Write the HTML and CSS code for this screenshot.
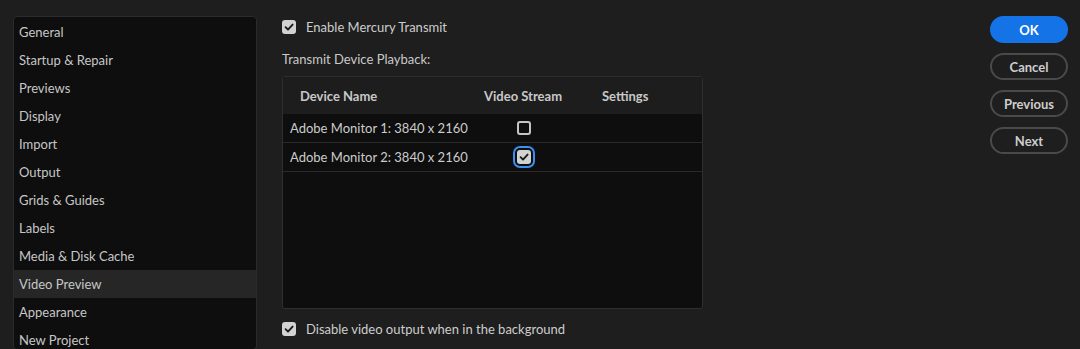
FILE: index.html
```html
<!DOCTYPE html>
<html>
<head>
<meta charset="utf-8">
<link rel="stylesheet" href="styles.css">
</head>
<body>
<div class="dialog">
  <nav class="sidebar">
    <div class="item">General</div>
    <div class="item">Startup &amp; Repair</div>
    <div class="item">Previews</div>
    <div class="item">Display</div>
    <div class="item">Import</div>
    <div class="item">Output</div>
    <div class="item">Grids &amp; Guides</div>
    <div class="item">Labels</div>
    <div class="item">Media &amp; Disk Cache</div>
    <div class="item selected">Video Preview</div>
    <div class="item">Appearance</div>
    <div class="item">New Project</div>
  </nav>
  <main class="content">
    <label class="check-row first">
      <span class="cb checked"><svg viewBox="0 0 14 14"><path d="M3.6 7.2 L6 9.6 L10.6 4.6" /></svg></span>
      <span class="label">Enable Mercury Transmit</span>
    </label>
    <div class="section-label">Transmit Device Playback:</div>
    <div class="table">
      <div class="thead">
        <div class="th c1">Device Name</div>
        <div class="th c2">Video Stream</div>
        <div class="th c3">Settings</div>
      </div>
      <div class="tr">
        <div class="td c1">Adobe Monitor 1: 3840 x 2160</div>
        <div class="td c2"><span class="cb empty"></span></div>
        <div class="td c3"></div>
      </div>
      <div class="tr">
        <div class="td c1">Adobe Monitor 2: 3840 x 2160</div>
        <div class="td c2"><span class="cb checked focus"><svg viewBox="0 0 14 14"><path d="M3.6 7.2 L6 9.6 L10.6 4.6" /></svg></span></div>
        <div class="td c3"></div>
      </div>
    </div>
    <label class="check-row last">
      <span class="cb checked"><svg viewBox="0 0 14 14"><path d="M3.6 7.2 L6 9.6 L10.6 4.6" /></svg></span>
      <span class="label">Disable video output when in the background</span>
    </label>
  </main>
  <div class="spacer"></div>
  <aside class="buttons">
    <button class="btn primary">OK</button>
    <button class="btn">Cancel</button>
    <button class="btn">Previous</button>
    <button class="btn">Next</button>
  </aside>
</div>
</body>
</html>
```

FILE: styles.css
```css
html, body {
  margin: 0;
  padding: 0;
  background: #1e1e1e;
  height: 349px;
  overflow: hidden;
}
body {
  font-family: Lato, "Open Sans", sans-serif;
  font-size: 13px;
  color: #cbcbcb;
}
.dialog {
  display: flex;
  align-items: flex-start;
  height: 349px;
  overflow: hidden;
}
.sidebar {
  margin-left: 13px;
  margin-top: 16px;
  width: 242px;
  height: 331px;
  background: #0e0e0e;
  border: 1px solid #2b2b2b;
  border-radius: 4px;
  padding-top: 1px;
  box-sizing: content-box;
  overflow: hidden;
}
.item {
  height: 28px;
  line-height: 28px;
  padding-left: 5px;
  color: #c6c6c6;
  white-space: nowrap;
}
.item.selected {
  background: #262626;
}
.content {
  margin-left: 25px;
  width: 421px;
  display: flex;
  flex-direction: column;
  margin-top: 16px;
}
.check-row {
  display: flex;
  align-items: center;
  height: 22px;
}
.check-row .label {
  margin-left: 10px;
  color: #cdcdcd;
}
.check-row.last {
  margin-top: 9px;
}
.cb {
  width: 14px;
  height: 14px;
  box-sizing: border-box;
  border-radius: 3px;
  display: inline-flex;
  align-items: center;
  justify-content: center;
  flex: none;
}
.cb.checked {
  background: #d2d2d2;
}
.cb svg {
  width: 14px;
  height: 14px;
}
.cb svg path {
  fill: none;
  stroke: #1a1a1a;
  stroke-width: 1.9;
  stroke-linecap: round;
  stroke-linejoin: round;
}
.cb.empty {
  border: 2px solid #c4c4c4;
}
.cb.focus {
  box-shadow: 0 0 0 2px #0e0e0e, 0 0 0 4px #3a8ff0;
}
.section-label {
  margin-top: 10px;
  height: 22px;
  line-height: 22px;
  color: #c9c9c9;
}
.table {
  margin-top: 6px;
  height: 233px;
  box-sizing: border-box;
  border: 1px solid #2e2e2e;
  border-radius: 3px;
  background: #0e0e0e;
  overflow: hidden;
}
.thead, .tr {
  display: grid;
  grid-template-columns: 201px 118px 1fr;
  align-items: center;
}
.thead {
  height: 37px;
  background: #1d1d1d;
}
.th {
  font-weight: bold;
  color: #c8c8c8;
}
.th.c1 {
  padding-left: 17px;
}
.tr {
  height: 28px;
  border-bottom: 1px solid #2a2a2a;
}
.td.c1 {
  padding-left: 7px;
  color: #cccccc;
  white-space: nowrap;
}
.td.c2 {
  display: flex;
  padding-left: 33px;
}
.spacer {
  flex: 1;
}
.buttons {
  margin-top: 16px;
  margin-right: 12px;
  width: 78px;
  display: flex;
  flex-direction: column;
  gap: 10px;
}
.btn {
  height: 27px;
  width: 78px;
  border-radius: 14px;
  border: 2px solid #4a4a4a;
  background: transparent;
  color: #cdcdcd;
  font-family: Lato, "Open Sans", sans-serif;
  font-size: 13px;
  font-weight: bold;
  padding: 0;
}
.btn.primary {
  background: #1473e6;
  border-color: #1473e6;
  color: #ffffff;
}
```
